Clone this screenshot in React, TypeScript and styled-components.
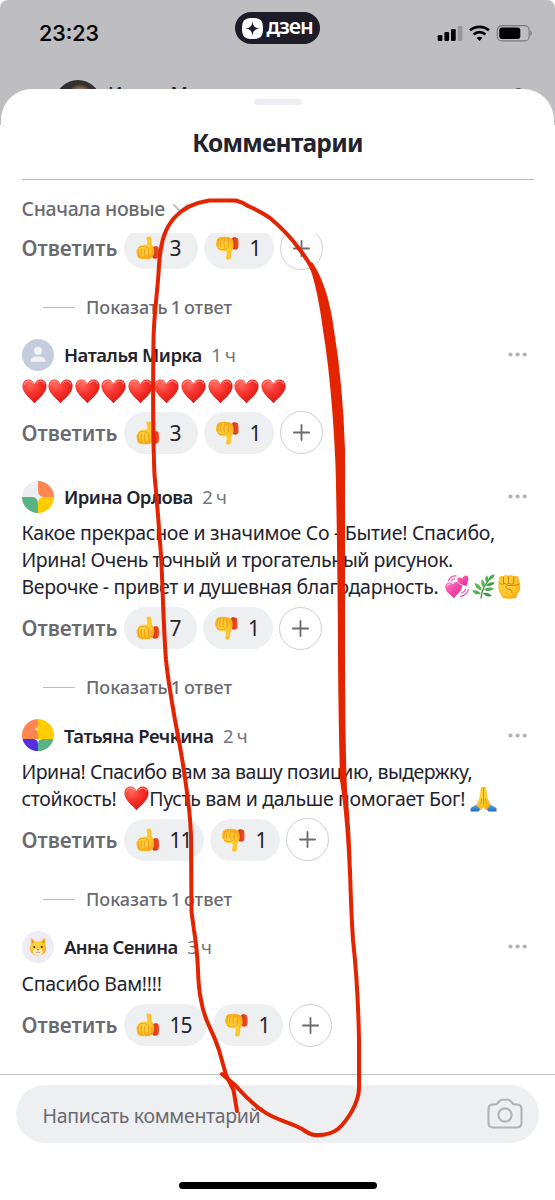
import React from "react";
import styled, { createGlobalStyle } from "styled-components";

const GlobalStyle = createGlobalStyle`
  * { box-sizing: border-box; }
  body { margin: 0; background: #fff; }
`;

const Screen = styled.div`
  position: relative;
  width: 555px;
  height: 1200px;
  overflow: hidden;
  display: flex;
  flex-direction: column;
  background: linear-gradient(#bebec0 0 125px, #fff 125px);
  border-radius: 8px 8px 0 0;
  font-family: "Noto Sans", "Open Sans", sans-serif;
  color: #23232e;
`;

const StatusBar = styled.div`
  height: 68px;
  flex: none;
  display: grid;
  grid-template-columns: 235px 85px 1fr;
  align-items: start;
`;
const Clock = styled.div`
  padding: 20px 0 0 39px;
  font: 500 21.5px/27px Inter, sans-serif;
  letter-spacing: 0;
  -webkit-text-stroke: 0.2px #000;
  color: #000;
`;
const Brand = styled.div`
  margin-top: 12px;
  height: 32px;
  border-radius: 16px;
  background: #1c1b27;
  color: #fff;
  display: flex;
  align-items: center;
  padding-left: 7px;
  gap: 3.5px;
  font-size: 21.5px;
  font-weight: 600;
  letter-spacing: -1px;
  line-height: 28px;
  span { margin-top: -4px; }
`;
const StatusIcons = styled.div`
  padding: 24px 0 0 117px;
`;

const Backdrop = styled.div`
  height: 20.5px;
  flex: none;
  overflow: hidden;
  display: flex;
  align-items: flex-start;
  padding: 12px 26px 0 55px;
`;
const AuthorPhoto = styled.div`
  width: 46px;
  height: 46px;
  flex: none;
  border-radius: 50%;
  background: radial-gradient(circle at 25px 16px, #a58066 0 6px, #3a302b 12px, #27302f 20px);
`;
const AuthorName = styled.div`
  margin: 1.5px auto 0 7px;
  font-size: 19px;
  line-height: 24px;
  font-weight: 500;
  letter-spacing: -0.6px;
`;
const AuthorMore = styled.div`
  width: 9px;
  height: 9px;
  margin: 8px 6px 0 0;
  border-radius: 50%;
  background: #55555c;
`;

const Sheet = styled.main`
  flex: 1;
  min-height: 0;
  display: flex;
  flex-direction: column;
  background: #fff;
  border-radius: 31px 31px 0 0;
  margin: 0 1px;
`;
const Handle = styled.div`
  width: 48px;
  height: 5.5px;
  margin: 10.5px auto 0;
  border-radius: 3px;
  background: #eeeef2;
`;
const Title = styled.h1`
  margin: 20px 0 0;
  height: 36.5px;
  text-align: center;
  font-size: 24.5px;
  line-height: 36px;
  font-weight: 700;
  letter-spacing: -0.75px;
`;
const Rule = styled.div`
  height: 1px;
  margin: 17.5px 20px 0 21px;
  background: #b9b9bb;
`;
const Sort = styled.div`
  height: 53.5px;
  padding: 15px 0 0 20.5px;
  display: flex;
  gap: 8px;
  font-size: 19.5px;
  line-height: 27px;
  letter-spacing: -0.35px;
  font-weight: 500;
  color: #6a6a70;
  svg { margin-top: 9px; }
`;

const Feed = styled.div`
  flex: 1;
  min-height: 0;
  overflow: hidden;
  padding: 0 20.5px;
`;
const Comment = styled.article<{ $after?: number }>`
  margin-bottom: ${(p) => p.$after ?? 18}px;
`;
const Head = styled.header`
  height: 32px;
  display: flex;
  align-items: center;
`;
const AvatarSlot = styled.div`
  width: 32px;
  height: 32px;
  margin-right: 10.5px;
`;
const Name = styled.span<{ $ls: number }>`
  font-size: 18.5px;
  font-weight: 600;
  line-height: 27px;
  letter-spacing: ${(p) => p.$ls}px;
`;
const Age = styled.span`
  margin: 0 auto 0 9.5px;
  font-size: 18.5px;
  line-height: 27px;
  letter-spacing: -0.8px;
  color: #74747a;
`;
const Body = styled.div`
  margin: 7.7px 0 6.5px;
`;
const Line = styled.p<{ $ls?: number }>`
  margin: 0;
  height: 26.7px;
  display: flex;
  align-items: center;
  white-space: pre;
  font-size: 19.5px;
  line-height: 26.7px;
  letter-spacing: ${(p) => p.$ls ?? 0}px;
`;
const Emojis = styled.span<{ $gap?: number; $left?: number; $right?: number }>`
  display: inline-flex;
  align-items: center;
  gap: ${(p) => p.$gap ?? 0}px;
  margin-left: ${(p) => p.$left ?? 0}px;
  margin-right: ${(p) => p.$right ?? 0}px;
`;
const Actions = styled.div<{ $top?: number }>`
  height: 42.5px;
  margin-top: ${(p) => p.$top ?? 0}px;
  display: flex;
  align-items: center;
`;
const Reply = styled.button`
  width: 102.5px;
  padding: 0;
  border: 0;
  background: none;
  text-align: left;
  font: 600 20.8px/28px "Noto Sans", sans-serif;
  color: #6a6a70;
`;
const Pill = styled.button<{ $w: number }>`
  width: ${(p) => p.$w}px;
  height: 42.5px;
  margin-right: 6px;
  padding: 0 0 0 12px;
  border: 0;
  border-radius: 22px;
  background: #eeeff1;
  display: flex;
  align-items: center;
  gap: 9.5px;
  font: 400 21px/28px "Noto Sans", sans-serif;
  letter-spacing: -0.9px;
  color: #23232e;
`;
const Plus = styled.button`
  width: 43px;
  height: 43px;
  padding: 0;
  border: 1px solid #cfcfd2;
  border-radius: 50%;
  background: #fff;
  display: grid;
  place-items: center;
`;
const Replies = styled.div`
  margin: 24.8px 0 17.6px 21px;
  height: 27px;
  display: flex;
  align-items: center;
  gap: 11.5px;
  font-size: 18px;
  line-height: 27px;
  letter-spacing: 0;
  word-spacing: -1.7px;
  font-weight: 500;
  color: #6a6a70;
  &::before { content: ""; width: 32px; height: 1.3px; background: #bfbfc2; }
`;

const Footer = styled.footer`
  height: 126px;
  flex: none;
  margin: 0 -1px;
  border-top: 1.5px solid #c3c3c5;
  display: flex;
  flex-direction: column;
  align-items: center;
  padding-top: 9.5px;
`;
const Field = styled.div`
  width: 523px;
  height: 58.5px;
  border-radius: 30px;
  background: #eeeff1;
  display: flex;
  align-items: center;
  justify-content: space-between;
  padding: 1px 16.5px 0 26.5px;
  font-size: 19.5px;
  letter-spacing: -0.33px;
  color: #6a6a70;
  span { padding-top: 2px; }
`;
const HomeBar = styled.div`
  width: 198px;
  height: 7px;
  margin-top: 38.5px;
  border-radius: 4px;
  background: #000;
`;
const Marker = styled.svg`
  position: absolute;
  inset: 0;
  pointer-events: none;
`;

const DefsSvg = styled.svg`
  display: block;
  flex: none;
`;
const Defs = () => (
  <DefsSvg width="0" height="0">
    <defs>
      <radialGradient id="skin" cx="0.4" cy="0.4" r="0.7">
        <stop offset="0" stopColor="#ffd640" />
        <stop offset="0.65" stopColor="#fec228" />
        <stop offset="1" stopColor="#f5a11a" />
      </radialGradient>
      <linearGradient id="cuff" x1="0" x2="1">
        <stop offset="0" stopColor="#c9320e" />
        <stop offset="1" stopColor="#f8502c" />
      </linearGradient>
      <radialGradient id="heart" cx="0.3" cy="0.2" r="0.85">
        <stop offset="0" stopColor="#ff6a5e" />
        <stop offset="0.45" stopColor="#f8352e" />
        <stop offset="1" stopColor="#d9140f" />
      </radialGradient>
      <linearGradient id="pink" x1="0" y1="0" x2="1" y2="1">
        <stop offset="0" stopColor="#ff7bc4" />
        <stop offset="1" stopColor="#e5198c" />
      </linearGradient>
      <linearGradient id="sleeve" x1="0" y1="0" x2="0" y2="1">
        <stop offset="0" stopColor="#5db5ec" />
        <stop offset="1" stopColor="#2467b5" />
      </linearGradient>
    </defs>
  </DefsSvg>
);

const Thumb = ({ down = false }: { down?: boolean }) => (
  <svg width="24" height="24" viewBox="0 0 24 24">
    <g transform={down ? "matrix(1 0 0 -1 -0.5 24)" : undefined}>
      <path d="M16.500 12c.6-1.900 5.300-2.200 6-.6.8 3 .8 6.500 0 9.900-.6 1.700-5.400 2.100-6 .3z" fill="url(#cuff)" />
      <path d="M10.600 8.800c.9-1.600.8-3.500 0-5.800C10 1.300 11.200.4 12.800.4c2 0 2.700 1.500 2.700 3.600 0 3 .2 4.800 1.700 6.800 1.600 2.300 1.500 8.400-.6 10.400-2.600 2.300-8.500 2.700-12.400 1.500C2 22 .8 20 1 17.700c-1-1.600-.8-4 .7-5.300C2.800 9.200 6.800 8 10.600 8.800z" fill="url(#skin)" />
      <path d="M2.800 11.900c2.200-1.900 6.300-2 9.300.1 1 .8 1.100 2.200.4 2.900M2.500 13.500c-.6 2.500-.1 5.600 1.300 7.500M5.600 12.900c-1 2.600-.6 6.500.7 8.700M8.900 13c-.8 2.600-.5 6.300.6 8.700M12.300 14.600c.9 2.200.7 4.800-.3 6.800" fill="none" stroke="#e2951b" strokeWidth="0.8" strokeLinecap="round" />
    </g>
  </svg>
);

const Heart = ({ size = 25 }: { size?: number }) => (
  <svg width={size} height={size} viewBox="0 0 25 25">
    <path d="M12.500 24.300C11 21.600.4 14.800.4 7.200.4 3.300 3.200.6 6.600.6c2.700 0 5 1.800 5.900 4.500C13.400 2.400 15.700.6 18.400.6c3.400 0 6.200 2.700 6.200 6.600 0 7.600-10.600 14.400-12.100 17.100z" fill="url(#heart)" />
    <path d="M2.300 5.600C3 3.200 5 2 7 2.100s3.200 1.100 4 2.500M14.700 4c.9-1.300 2.300-2 4-1.900 1.700.1 3.200 1.100 3.900 2.800" fill="none" stroke="#ffa79c" strokeOpacity=".65" strokeWidth="1.1" strokeLinecap="round" />
  </svg>
);

const TwinHearts = () => (
  <svg width="24" height="25" viewBox="0 0 24 25">
    <path d="M9 24.500C7.500 21.500.6 19 .2 13 0 8.700 5.300 6.800 8 10.200c2.300-3.400 8.700-3.300 9 1.500.3 5.300-6.200 8.800-8 12.800z" fill="url(#pink)" />
    <path d="M21.800 12.500C19 11.200 13.200 11 12 6.800c-.7-3.300 3-5 5.300-2.600C18 .8 22.500.1 23.500 3.400c.8 3.400-1.600 5.800-1.700 9.100z" fill="url(#pink)" stroke="#fff" strokeWidth=".6" />
    <path d="M15.500 22.300c4.800-1 7.500-3.500 7.700-7M16.500 19c2-.6 3.300-1.800 4-3.500M3.500 6.500c1-3 3.500-4.500 7.500-4.600M6 7c.8-1.300 2-2 3.800-2.200" fill="none" stroke="#f452ad" strokeWidth="1.200" strokeLinecap="round" />
    <path d="M2.300 12c.5-1.400 1.700-2 3-1.800" fill="none" stroke="#ffb4df" strokeWidth="1.100" strokeLinecap="round" />
  </svg>
);

const Herb = () => (
  <svg width="23" height="25" viewBox="0 0 23 25">
    <path d="M9 24.500C9.500 17 13 9 20 3" fill="none" stroke="#328c3c" strokeWidth="1.300" />
    <g fill="#4fae4c">
      <path d="M22.500.2c-4 .6-6.500 3-6 6C20.500 5.500 22.300 3.500 22.500.2z" />
      <path d="M14.800 1.300c-2.200 3-2 5.700 0 7.500 2-2.500 2-5 0-7.500zM10 5.200c-1.500 3.700-.8 6.500 2 8.200C13.500 10.300 13 7.500 10 5.200z" />
      <path d="M2.500 9c1.200 4.500 3.500 6.800 7.300 7.300C9.500 12.500 6.800 10 2.500 9zM.2 16.500c2 3.500 5 4.500 8.600 3.500C7 17 4 15.800.2 16.500z" />
      <path d="M22.800 8.500c-4.300-.7-7 .5-8.700 3.300 3.800.8 6.700-.3 8.700-3.300zM22 14.500c-4-1.700-7.300-1.300-10 1.200 3.300 2 6.700 1.500 10-1.200zM20 22c-2.500-3-5.500-4-9.300-3 2.300 3.200 5.300 4.200 9.300 3z" fill="#3c9a43" />
    </g>
    <path d="M2.500 9c2 2 5 4 7.300 7.300M22 14.500l-9 1M10 5.500l2 7" stroke="#8bd072" strokeWidth=".6" fill="none" />
  </svg>
);

const Fist = () => (
  <svg width="23" height="25" viewBox="0 0 23 25">
    <path d="M4.500 24c.3-2-3.700-4.300-4-9.500C.3 11 .5 6.500 1 4c.5-2 3-2.500 4.300-1.400C6.200.8 9.300.5 10.500 1.900c1.300-1.500 4-1.300 5 .3 1.800-1.100 4.500-.5 5 1.800C21.500 8 22.800 11.500 22 15c-.7 3.700-3.500 5.500-3.700 9-3 1-10.500 1-13.800 0z" fill="url(#skin)" />
    <path d="M5.500 3v6.500M10.600 2.500V9M15.700 3v6.500M1.500 9c2 2 4 1.500 4.500.2 1.500 1.300 3.700 1.300 4.700 0 1.500 1.300 4 1.200 5 0M21 10c-3.500 2-8.500 1.200-11.500 1.400-2.300.5-1.700 3.500 1 3.700 2 .2 3.500 1.300 3.500 3.500" fill="none" stroke="#c9820c" strokeWidth="1" strokeLinecap="round" />
  </svg>
);

const Pray = () => (
  <svg width="27" height="26" viewBox="0 0 27 26">
    <path d="M7.500 18L.5 22v3.500h8l3-4zM19.500 18l7 4v3.500h-8l-3-4z" fill="url(#sleeve)" />
    <path d="M13.500 1.500c-.7-1.400-2.500-1-2.700.7L9.600 11c-.4 3-2.600 5.500-3.100 8.500l4.500 4.500c1.700-1.300 2.500-3 2.500-5 0 2 .8 3.700 2.500 5l4.500-4.500c-.5-3-2.700-5.500-3.100-8.500l-1.200-8.800c-.2-1.700-2-2.100-2.700-.7z" fill="url(#skin)" />
    <path d="M13.500 1.500V19M11.700 12.500c.2 2.500-.4 4.300-1.700 5.500M15.300 12.500c-.2 2.500.4 4.300 1.700 5.500" fill="none" stroke="#d98c0c" strokeWidth=".9" />
  </svg>
);

const PersonAvatar = () => (
  <svg width="32" height="32" viewBox="0 0 32 32">
    <circle cx="16" cy="16" r="16" fill="#c5cddd" />
    <circle cx="16" cy="11.700" r="4" fill="#f1f3f7" />
    <path d="M8.500 22.800c0-3.600 3-5.300 7.500-5.300s7.500 1.700 7.500 5.300z" fill="#f1f3f7" />
  </svg>
);

const PetalAvatar = () => (
  <svg width="32" height="32" viewBox="0 0 32 32">
    <path d="M0 16A16 16 0 0 1 16 0V16z" fill="#eceef2" />
    <path d="M16 0A16 16 0 0 1 32 16H16z" fill="#ff8650" />
    <path d="M32 16A16 16 0 0 1 16 32V16z" fill="#ffcc00" />
    <path d="M16 32A16 16 0 0 1 0 16H16z" fill="#57b380" />
    <path d="M10 16c4 .5 5.500 2 6 6 .5-4 2-5.500 6-6-4-.5-5.500-2-6-6l-3 3z" fill="#eceef2" />
  </svg>
);

const StarAvatar = () => (
  <svg width="32" height="32" viewBox="0 0 32 32">
    <path d="M.5 20A16 16 0 0 1 16 0V20z" fill="#ff8650" />
    <path d="M16 0A16 16 0 0 1 31.500 20H16z" fill="#ffcc00" />
    <path d="M.5 20H16V32A16 16 0 0 1 .5 20z" fill="#5030e0" />
    <path d="M31.500 20H16V32A16 16 0 0 0 31.500 20z" fill="#57b380" />
    <path d="M16 6.500c-.4 2.300-1.200 3-3.500 3.400 2.300.4 3.100 1.100 3.500 3.400zM11.500 20c3 .5 4 1.500 4.500 4.500.5-3 1.500-4 4.500-4.500z" fill="#fff" />
  </svg>
);

const CatAvatar = () => (
  <svg width="32" height="32" viewBox="0 0 32 32">
    <circle cx="16" cy="16" r="16" fill="#efecfa" />
    <path d="M8.800 14L8.600 8.200c0-.8.7-1 1.300-.7 1.500.7 2.700 1.800 3.700 2.900h4.800c1-1.100 2.200-2.200 3.700-2.900.6-.3 1.300-.1 1.300.7L23.200 14c1.100 2 1.300 4.500.3 6.500-1.300 2.700-4 4-7.500 4s-6.200-1.300-7.500-4c-1-2-.8-4.500.3-6.500z" fill="url(#skin)" />
    <path d="M9.800 9.300l.2 3 2.200-1.700zM22.200 9.300l-.2 3-2.200-1.700z" fill="#ee7a52" />
    <ellipse cx="16" cy="20.900" rx="4.600" ry="3.300" fill="#fff1d0" />
    <path d="M14.500 18h3L16 19.800z" fill="#f0486c" />
    <circle cx="12.300" cy="16" r="1.100" fill="#483018" />
    <circle cx="19.700" cy="16" r="1.100" fill="#483018" />
    <path d="M13.800 21.200c.9.700 1.800.4 2.200-.5.400.9 1.300 1.200 2.200.5" fill="none" stroke="#8b5b2c" strokeWidth=".6" />
  </svg>
);

const DotsIcon = styled.svg`
  margin-right: 6.5px;
`;
const Dots = () => (
  <DotsIcon width="19" height="5" viewBox="0 0 19 5" fill="#b4b4b8">
    <circle cx="2.500" cy="2.500" r="2.100" />
    <circle cx="9.600" cy="2.500" r="2.100" />
    <circle cx="16.700" cy="2.500" r="2.100" />
  </DotsIcon>
);

const Reactions = ({ up, w, top }: { up: number; w: number; top?: number }) => (
  <Actions $top={top}>
    <Reply>Ответить</Reply>
    <Pill $w={w}><Thumb />{up}</Pill>
    <Pill $w={70}><Thumb down />1</Pill>
    <Plus>
      <svg width="17" height="17" viewBox="0 0 17 17" stroke="#6a6a70" strokeWidth="1.800" strokeLinecap="round">
        <path d="M8.500 .9V16.100M.9 8.500H16.100" />
      </svg>
    </Plus>
  </Actions>
);

const Header = ({ avatar, name, age, ls }: { avatar: React.ReactNode; name: string; age: string; ls: number }) => (
  <Head>
    <AvatarSlot>{avatar}</AvatarSlot>
    <Name $ls={ls}>{name}</Name>
    <Age>{age}</Age>
    <Dots />
  </Head>
);

export default function App() {
  return (
    <Screen>
      <GlobalStyle />
      <Defs />
      <StatusBar>
        <Clock>23:23</Clock>
        <Brand>
          <svg width="21" height="21" viewBox="0 0 21 21">
            <path d="M10.500 0C18.500 0 21 2.500 21 10.500S18.500 21 10.500 21 0 18.500 0 10.500 2.500 0 10.500 0z" fill="#fff" />
            <path d="M10.500 3c.4 5.200 2.300 7.100 7.500 7.500-5.200.4-7.100 2.300-7.500 7.500-.4-5.200-2.300-7.100-7.500-7.500 5.200-.4 7.100-2.300 7.500-7.500z" fill="#1c1b27" />
          </svg>
          <span>дзен</span>
        </Brand>
        <StatusIcons>
          <svg width="97" height="18" viewBox="0 0 97 18">
            <rect x=".7" y="11" width="4.700" height="6" rx="1.300" />
            <rect x="7.400" y="8" width="4.700" height="9" rx="1.300" />
            <rect x="14" y="5" width="4.700" height="12" rx="1.300" />
            <rect x="20.700" y="2" width="4.700" height="15" rx="1.300" fill="#98989a" />
            <path d="M33 6.300a13.500 12 0 0 1 19 0" fill="none" stroke="#000" strokeWidth="2.800" />
            <path d="M36.600 10.400a8.500 7.800 0 0 1 11.800 0" fill="none" stroke="#000" strokeWidth="2.700" />
            <path d="M39.600 13.800a4.500 4 0 0 1 5.800 0L42.500 17z" />
            <rect x="60.300" y="1.600" width="31.800" height="15.300" rx="4.500" fill="none" stroke="#7c7c7e" strokeWidth="1.200" />
            <rect x="62.300" y="3.600" width="21" height="11.300" rx="2.600" />
            <path d="M93.400 6.600c1.900.7 1.900 4.600 0 5.300z" fill="#7c7c7e" />
          </svg>
        </StatusIcons>
      </StatusBar>
      <Backdrop>
        <AuthorPhoto />
        <AuthorName>Ирина М</AuthorName>
        <AuthorMore />
      </Backdrop>
      <Sheet>
        <Handle />
        <Title>Комментарии</Title>
        <Rule />
        <Sort>
          Сначала новые
          <svg width="15" height="10" viewBox="0 0 15 10" fill="none" stroke="#c3c3c6" strokeWidth="2" strokeLinecap="round">
            <path d="M1 1l6.500 6.500L14 1" />
          </svg>
        </Sort>
        <Feed>
          <Reactions up={3} w={74} top={-6.2} />
          <Replies>Показать 1 ответ</Replies>
          <Comment $after={26.5}>
            <Header avatar={<PersonAvatar />} name="Наталья Мирка" age="1 ч" ls={-0.46} />
            <Body>
              <Line><Emojis $gap={1.6}>{Array.from({ length: 10 }, (_, i) => <Heart key={i} />)}</Emojis></Line>
            </Body>
            <Reactions up={3} w={74} />
          </Comment>
          <Comment>
            <Header avatar={<PetalAvatar />} name="Ирина Орлова" age="2 ч" ls={-0.55} />
            <Body>
              <Line $ls={-0.28}>Какое прекрасное и значимое Со - Бытие! Спасибо,</Line>
              <Line $ls={-0.42}>Ирина! Очень точный и трогательный рисунок.</Line>
              <Line $ls={-0.32}>Верочке - привет и душевная благодарность.<Emojis $gap={3} $left={6.5}><TwinHearts /><Herb /><Fist /></Emojis></Line>
            </Body>
            <Reactions up={7} w={72.500} />
            <Replies>Показать 1 ответ</Replies>
          </Comment>
          <Comment>
            <Header avatar={<StarAvatar />} name="Татьяна Речкина" age="2 ч" ls={-0.48} />
            <Body>
              <Line $ls={-0.49}>Ирина! Спасибо вам за вашу позицию, выдержку,</Line>
              <Line $ls={-0.33}>стойкость! <Emojis $left={2.5} $right={0.5}><Heart /></Emojis>Пусть вам и дальше помогает Бог!<Emojis $left={5}><Pray /></Emojis></Line>
            </Body>
            <Reactions up={11} w={80} />
            <Replies>Показать 1 ответ</Replies>
          </Comment>
          <Comment>
            <Header avatar={<CatAvatar />} name="Анна Сенина" age="3 ч" ls={-0.64} />
            <Body><Line $ls={-0.3}>Спасибо Вам!!!!</Line></Body>
            <Reactions up={15} w={83} />
          </Comment>
        </Feed>
        <Footer>
          <Field>
            <span>Написать комментарий</span>
            <svg width="36" height="32" viewBox="0 0 36 32" fill="none" stroke="#b1b2b5" strokeWidth="2.100" strokeLinejoin="round">
              <path d="M6 6.500h2c1.200 0 1.800-.4 2.500-1.200l2-2.300C13.200 2.100 13.800 1.700 15 1.700h6c1.200 0 1.800.4 2.500 1.300l2 2.300c.7.800 1.300 1.200 2.500 1.200h2c3 0 4.500 1.500 4.500 4.500v14c0 3-1.500 4.500-4.500 4.500H6c-3 0-4.500-1.500-4.500-4.500V11c0-3 1.500-4.500 4.500-4.500z" />
              <circle cx="18" cy="17" r="6.600" />
            </svg>
          </Field>
          <HomeBar />
        </Footer>
      </Sheet>
      <Marker width="555" height="1200" viewBox="0 0 555 1200">
        <g fill="none" stroke="#e42400" strokeWidth="4" strokeLinecap="round" strokeLinejoin="round">
          <path d="M237 1111L233.500 1090L226 1075L219 1050Q215 1038 210 1028Q203 1013 201 1000Q198.500 988 198 970Q197 948 194 930L191.500 912L191 835Q190 812 186 785Q182 755 175 720Q168 680 166 660C163 620 163 590 161 555Q157 500 154.500 475C153 440 153 380 153.500 340C154 310 158 290 159 265C161 240 165 228 175 217Q187 204 209 200.500H236Q242 202 248 206Q260 211 270 218Q288 233 300 250Q308 260 314 272" />
          <path d="M350 870Q351 910 353 940Q358 985 359 1040V1088C359 1103 347 1121 338 1129Q329 1136 314 1135Q309 1134 302 1129C290 1122 275 1120 263 1111Q251 1103 235 1085L222 1074" />
        </g>
        <path d="M308.500 264L312 262Q328 285 334 330Q343 385 345 450V640Q345 740 347 790Q351 830 352 875H348Q346 820 340 780Q338 700 338 640Q337 520 335.500 465Q332 385 323 330Q317 285 308.500 264z" fill="#e42400" />
      </Marker>
    </Screen>
  );
}
